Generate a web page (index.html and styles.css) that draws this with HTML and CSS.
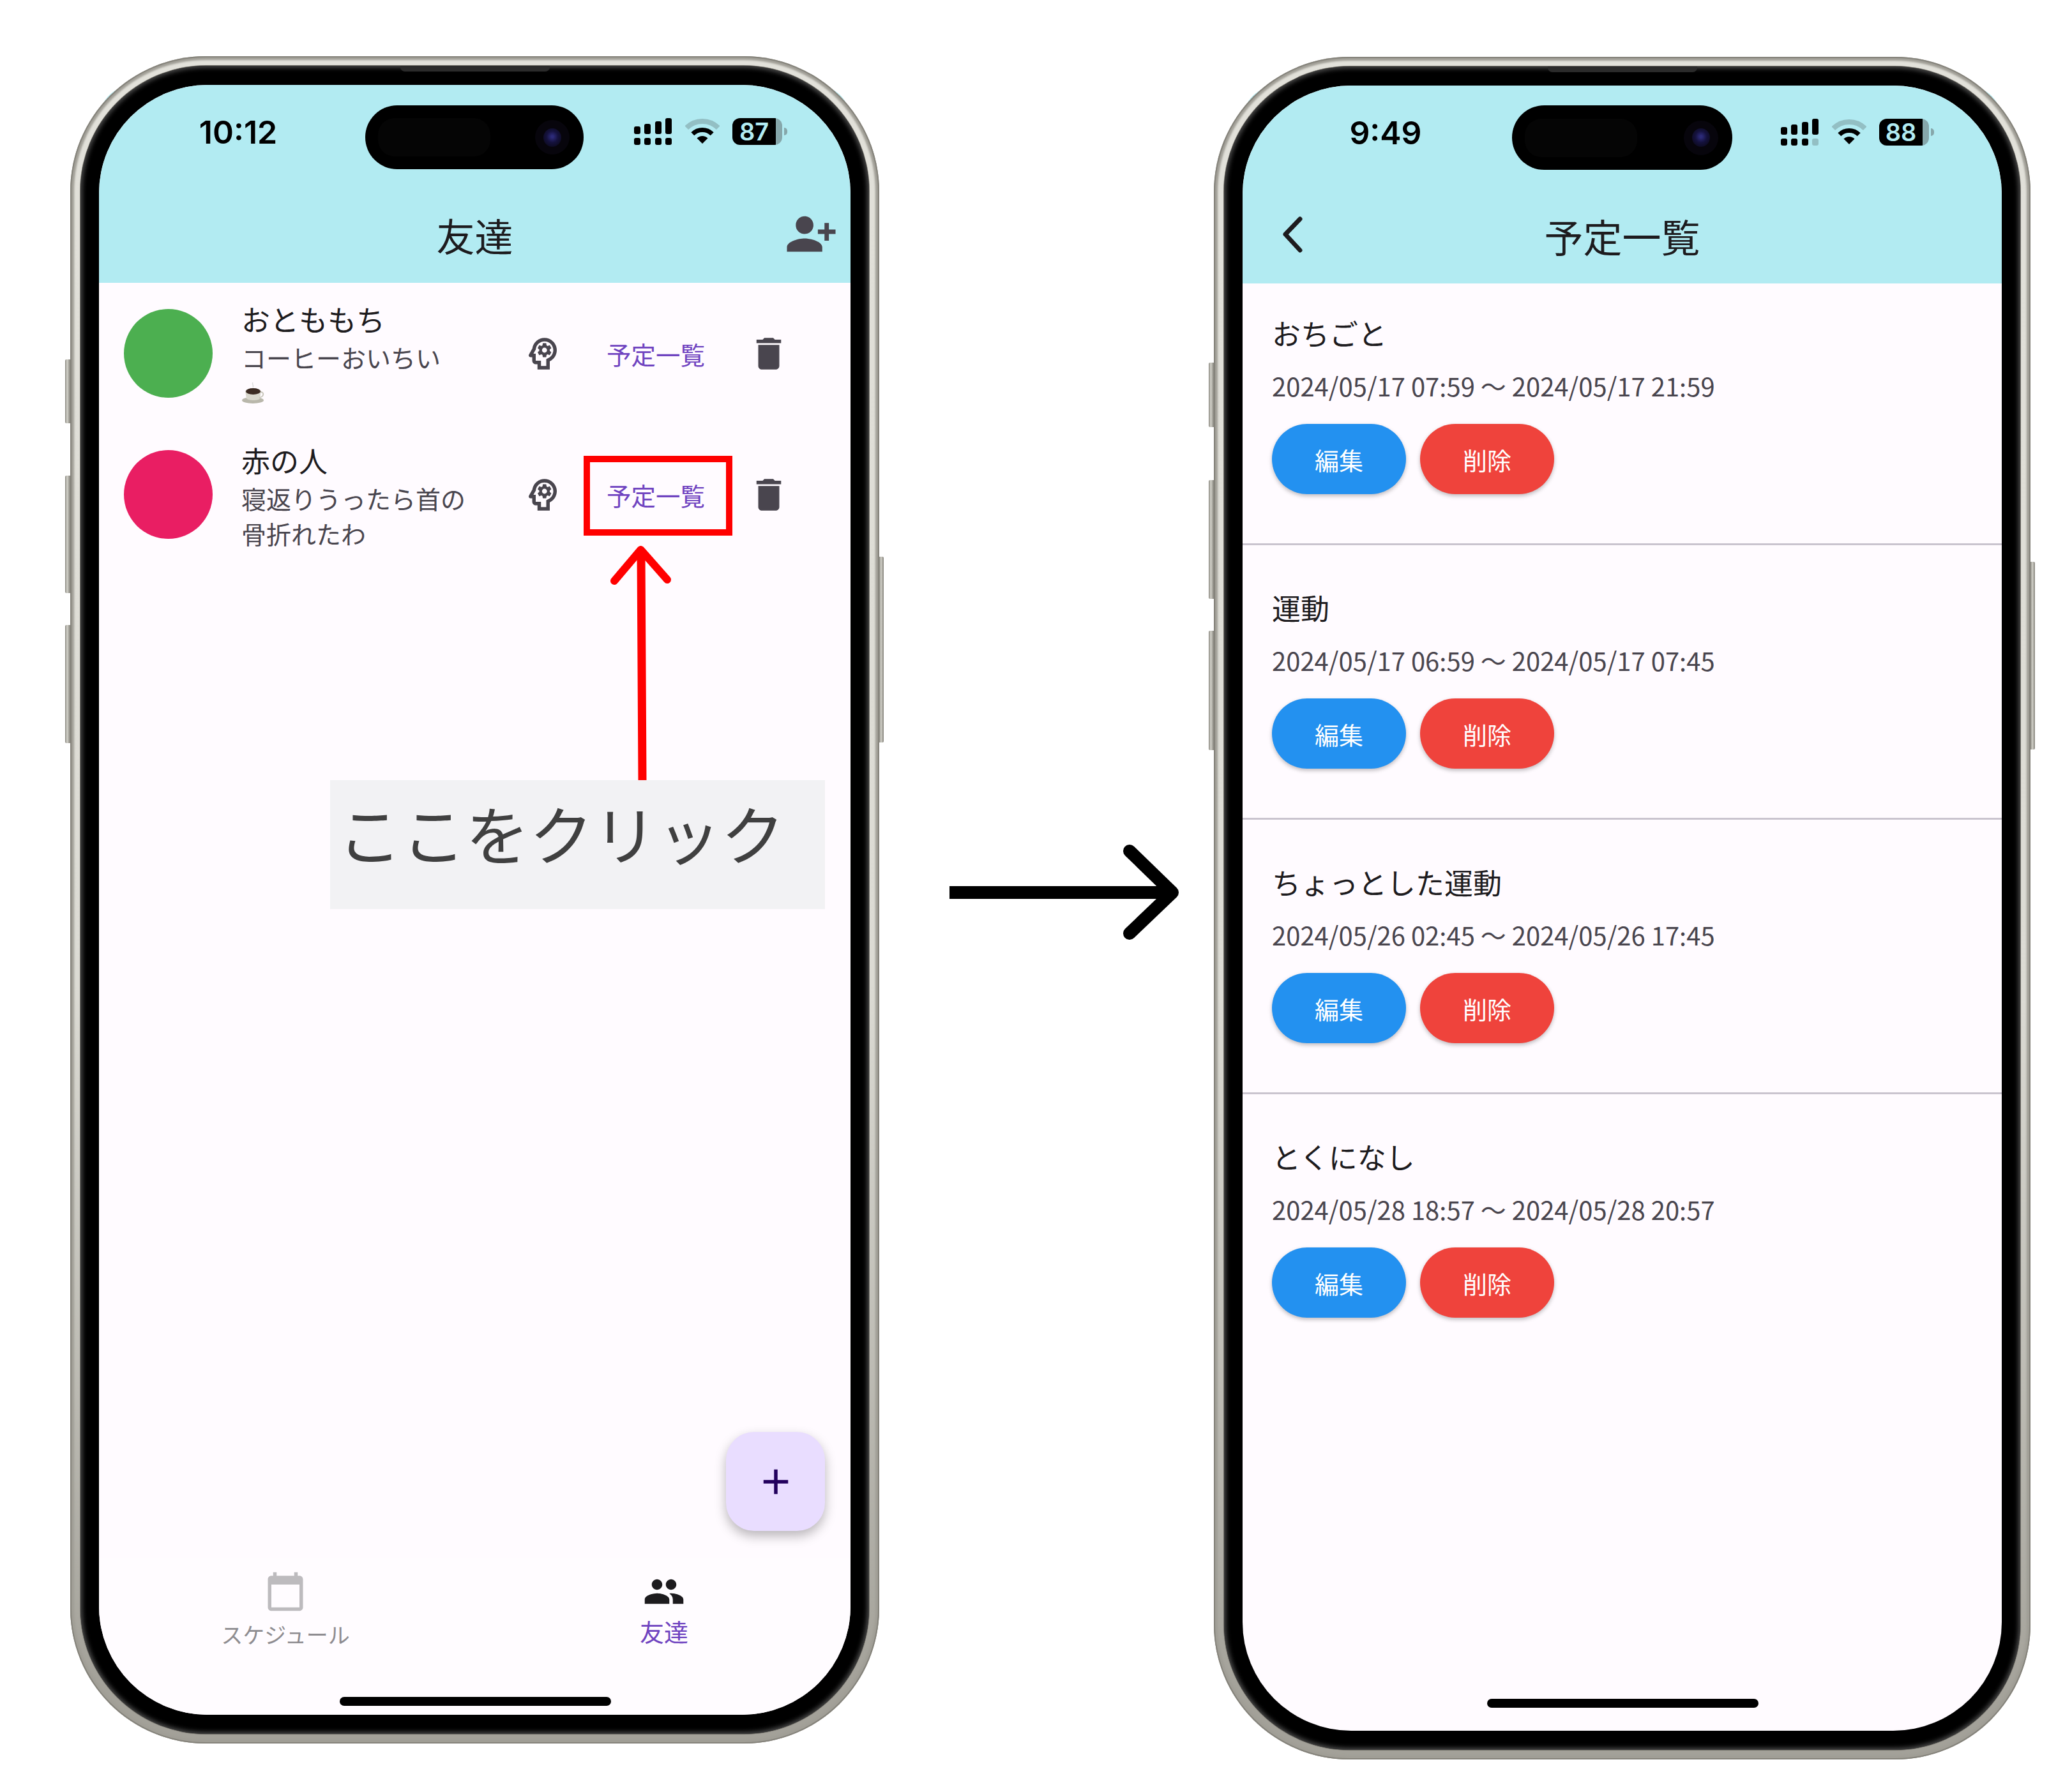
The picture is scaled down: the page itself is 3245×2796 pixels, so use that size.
FILE: index.html
```html
<!DOCTYPE html>
<html lang="ja">
<head>
  <meta charset="UTF-8">
  <meta name="viewport" content="width=device-width, initial-scale=1.0">
  <title>予定一覧</title>
  <link rel="stylesheet" href="styles.css">
</head>
<body>
  <div class="stage">

    <!-- left phone: friends -->
    <div class="phone phone-friends">
      <span class="side-btn side-1"></span>
      <span class="side-btn side-2"></span>
      <span class="side-btn side-3"></span>
      <span class="side-btn side-r"></span>
      <div class="bezel">
        <span class="speaker"></span>
        <div class="screen">
          <header class="app-head">
            <div class="status">
              <div class="clock">10:12</div>
              <div class="island"><span class="island-dark"></span><span class="camera"><span class="lens"></span></span></div>
              <div class="status-icons">
                <svg class="signal" viewBox="0 0 61 42">
                  <g fill="#000">
                    <rect x="1" y="13" width="10" height="12" rx="3"/>
                    <rect x="17" y="9" width="10" height="16" rx="3"/>
                    <rect x="34" y="5" width="10" height="20" rx="3"/>
                    <rect x="50" y="0" width="10" height="25" rx="3"/>
                    <rect x="1" y="31" width="10" height="11" rx="3"/>
                    <rect x="17" y="31" width="10" height="11" rx="3"/>
                    <rect x="34" y="31" width="10" height="11" rx="3"/>
                    <rect x="50" y="31" width="10" height="11" rx="3"/>
                  </g>
                </svg>
                <svg class="wifi" viewBox="0 0 54 40">
                  <path d="M2.25 14.25A35 35 0 0 1 51.75 14.25" fill="none" stroke="#93bfc4" stroke-width="8"/>
                  <path d="M11.8 23.8A21.5 21.5 0 0 1 42.2 23.8" fill="none" stroke="#000" stroke-width="7"/>
                  <path d="M27 39L18.5 30.5A12 12 0 0 1 35.5 30.5Z" fill="#000"/>
                </svg>
                <div class="battery"><div class="battery-body">87</div><span class="battery-nub"></span></div>
              </div>
            </div>
            <div class="title-row">
              <span></span>
              <h1 class="title">友達</h1>
              <svg class="add-friend" viewBox="0 0 24 24"><path d="M13 8c0-2.21-1.79-4-4-4S5 5.79 5 8s1.79 4 4 4 4-1.79 4-4zm2 2v2h3v3h2v-3h3v-2h-3V7h-2v3h-3zM1 18v2h16v-2c0-2.66-5.33-4-8-4s-8 1.34-8 4z"/></svg>
            </div>
          </header>

          <main class="friend-list">
            <div class="friend">
              <div class="avatar green"></div>
              <div class="friend-text">
                <div class="friend-name">おとももち</div>
                <div class="friend-sub">コーヒーおいちい<br>
                  <svg class="coffee" viewBox="0 0 38 33">
                    <path d="M18 0c-2 3 2 4 0 8" fill="none" stroke="#dcdcdc" stroke-width="1.5"/>
                    <ellipse cx="18" cy="28" rx="17" ry="5" fill="#b9b7ab"/>
                    <path d="M6 13h25l-2 12c-1 4-19 4-21 0z" fill="#d8d6cc"/>
                    <path d="M30 15c6 0 6 7-2 9" fill="none" stroke="#c8c6bb" stroke-width="2"/>
                    <ellipse cx="18.500" cy="14" rx="11.500" ry="5" fill="#3b2a22"/>
                  </svg>
                </div>
              </div>
              <svg class="icon" viewBox="0 0 24 24"><path d="M15.820 7.220l-1 .4c-.21-.16-.43-.29-.67-.39L14 6.170c-.02-.1-.1-.17-.2-.17h-1.600c-.1 0-.18.07-.19.17l-.15 1.060c-.24.1-.47.23-.67.39l-1-.4c-.09-.03-.2 0-.24.09l-.8 1.380c-.05.09-.03.2.05.26l.84.66c-.02.13-.04.26-.04.39 0 .13.01.26.03.39l-.84.66c-.07.06-.09.17-.05.25l.8 1.390c.05.09.15.12.25.09l.99-.4c.21.16.43.29.68.39l.14 1.060c.02.1.1.17.2.17h1.600c.1 0 .18-.07.2-.17l.15-1.060c.24-.1.47-.23.67-.39l.99.4c.09.04.2 0 .24-.09l.8-1.390c.05-.09.03-.19-.05-.25l-.83-.66c.02-.13.02-.26.02-.39 0-.13 0-.26-.02-.39l.83-.66c.07-.06.09-.17.05-.26l-.8-1.380c-.05-.09-.16-.12-.25-.09zM13 11.430c-.79 0-1.430-.64-1.430-1.430s.64-1.430 1.430-1.430 1.430.64 1.430 1.430-.64 1.430-1.430 1.430z"/><path fill-rule="evenodd" d="M19.940 9.060C19.500 5.730 16.570 3 13 3 9.470 3 6.570 5.610 6.080 9l-1.930 3.480c-.41.66.07 1.520.85 1.520h1v2c0 1.100.9 2 2 2h1v3h7v-4.680c2.620-1.250 4.350-4.080 3.940-7.260zM14.890 14.630l-.89.42V19h-3v-3H8v-4H6.700l1.330-2.330C8.210 7.060 10.350 5 13 5c2.760 0 5 2.240 5 5 0 2.090-1.260 3.880-3.110 4.630z"/></svg>
              <a class="text-btn">予定一覧</a>
              <svg class="icon" viewBox="0 0 24 24"><path d="M6 19c0 1.100.9 2 2 2h8c1.100 0 2-.9 2-2V7H6v12zM19 4h-3.500l-1-1h-5l-1 1H5v2h14V4z"/></svg>
            </div>
            <div class="friend">
              <div class="avatar pink"></div>
              <div class="friend-text">
                <div class="friend-name">赤の人</div>
                <div class="friend-sub">寝返りうったら首の<br>骨折れたわ</div>
              </div>
              <svg class="icon" viewBox="0 0 24 24"><path d="M15.820 7.220l-1 .4c-.21-.16-.43-.29-.67-.39L14 6.170c-.02-.1-.1-.17-.2-.17h-1.600c-.1 0-.18.07-.19.17l-.15 1.060c-.24.1-.47.23-.67.39l-1-.4c-.09-.03-.2 0-.24.09l-.8 1.380c-.05.09-.03.2.05.26l.84.66c-.02.13-.04.26-.04.39 0 .13.01.26.03.39l-.84.66c-.07.06-.09.17-.05.25l.8 1.390c.05.09.15.12.25.09l.99-.4c.21.16.43.29.68.39l.14 1.060c.02.1.1.17.2.17h1.600c.1 0 .18-.07.2-.17l.15-1.060c.24-.1.47-.23.67-.39l.99.4c.09.04.2 0 .24-.09l.8-1.390c.05-.09.03-.19-.05-.25l-.83-.66c.02-.13.02-.26.02-.39 0-.13 0-.26-.02-.39l.83-.66c.07-.06.09-.17.05-.26l-.8-1.380c-.05-.09-.16-.12-.25-.09zM13 11.430c-.79 0-1.430-.64-1.430-1.430s.64-1.430 1.430-1.430 1.430.64 1.430 1.430-.64 1.430-1.430 1.430z"/><path fill-rule="evenodd" d="M19.940 9.060C19.500 5.730 16.570 3 13 3 9.470 3 6.570 5.610 6.080 9l-1.930 3.480c-.41.66.07 1.520.85 1.520h1v2c0 1.100.9 2 2 2h1v3h7v-4.680c2.620-1.250 4.350-4.080 3.940-7.260zM14.890 14.630l-.89.42V19h-3v-3H8v-4H6.700l1.330-2.330C8.210 7.060 10.350 5 13 5c2.760 0 5 2.240 5 5 0 2.090-1.260 3.880-3.110 4.630z"/></svg>
              <a class="text-btn">予定一覧</a>
              <svg class="icon" viewBox="0 0 24 24"><path d="M6 19c0 1.100.9 2 2 2h8c1.100 0 2-.9 2-2V7H6v12zM19 4h-3.500l-1-1h-5l-1 1H5v2h14V4z"/></svg>
            </div>
          </main>

          <nav class="tabs">
            <div class="tab">
              <svg class="icon tab-off" viewBox="0 0 24 24"><path d="M20 3h-1V1h-2v2H7V1H5v2H4c-1.100 0-2 .9-2 2v16c0 1.100.9 2 2 2h16c1.100 0 2-.9 2-2V5c0-1.100-.9-2-2-2zm0 18H4V8h16v13z"/></svg>
              <span class="tab-label">スケジュール</span>
            </div>
            <div class="tab tab-on">
              <svg class="icon" viewBox="0 0 24 24"><path d="M16 11c1.660 0 2.990-1.340 2.990-3S17.660 5 16 5c-1.660 0-3 1.340-3 3s1.340 3 3 3zm-8 0c1.660 0 2.990-1.340 2.990-3S9.660 5 8 5C6.340 5 5 6.340 5 8s1.340 3 3 3zm0 2c-2.330 0-7 1.170-7 3.500V19h14v-2.500c0-2.330-4.670-3.500-7-3.500zm8 0c-.29 0-.62.02-.97.05 1.160.84 1.970 1.970 1.970 3.450V19h6v-2.500c0-2.330-4.670-3.500-7-3.500z"/></svg>
              <span class="tab-label">友達</span>
            </div>
          </nav>

          <button class="fab"><svg viewBox="0 0 24 24"><path d="M19 13h-6v6h-2v-6H5v-2h6V5h2v6h6v2z"/></svg></button>
          <span class="home-bar"></span>

          <!-- annotations drawn on top of the screenshot -->
          <div class="red-box"></div>
          <svg class="red-arrow" viewBox="0 0 110 367">
            <path d="M54 12L56 367" stroke-width="13"/>
            <path d="M12 55L53.500 6L95 53" stroke-width="12"/>
          </svg>
          <div class="click-label">ここをクリック</div>
        </div>
      </div>
    </div>

    <svg class="big-arrow" viewBox="0 0 370 150">
      <path d="M0 75H345" stroke-width="20"/>
      <path d="M282 10L349 75L282 139" stroke-width="20"/>
    </svg>

    <!-- right phone: schedule list -->
    <div class="phone phone-plans">
      <span class="side-btn side-1"></span>
      <span class="side-btn side-2"></span>
      <span class="side-btn side-3"></span>
      <span class="side-btn side-r"></span>
      <div class="bezel">
        <span class="speaker"></span>
        <div class="screen">
          <header class="app-head">
            <div class="status">
              <div class="clock">9:49</div>
              <div class="island"><span class="island-dark"></span><span class="camera"><span class="lens"></span></span></div>
              <div class="status-icons">
                <svg class="signal" viewBox="0 0 61 42">
                  <g fill="#000">
                    <rect x="1" y="13" width="10" height="12" rx="3"/>
                    <rect x="17" y="9" width="10" height="16" rx="3"/>
                    <rect x="34" y="5" width="10" height="20" rx="3"/>
                    <rect x="50" y="0" width="10" height="25" rx="3"/>
                    <rect x="1" y="31" width="10" height="11" rx="3"/>
                    <rect x="17" y="31" width="10" height="11" rx="3"/>
                    <rect x="34" y="31" width="10" height="11" rx="3"/>
                    <rect x="50" y="31" width="10" height="11" rx="3" fill="#93bfc4"/>
                  </g>
                </svg>
                <svg class="wifi" viewBox="0 0 54 40">
                  <path d="M2.25 14.25A35 35 0 0 1 51.75 14.25" fill="none" stroke="#93bfc4" stroke-width="8"/>
                  <path d="M11.8 23.8A21.5 21.5 0 0 1 42.2 23.8" fill="none" stroke="#000" stroke-width="7"/>
                  <path d="M27 39L18.5 30.5A12 12 0 0 1 35.5 30.5Z" fill="#000"/>
                </svg>
                <div class="battery"><div class="battery-body">88</div><span class="battery-nub"></span></div>
              </div>
            </div>
            <div class="title-row">
              <svg class="back" viewBox="0 0 36 60"><path d="M30 6L7 30L30 55"/></svg>
              <h1 class="title">予定一覧</h1>
              <span></span>
            </div>
          </header>

          <main class="plan-list">
            <section class="plan">
              <div class="plan-name">おちごと</div>
              <div class="plan-date">2024/05/17 07:59 〜 2024/05/17 21:59</div>
              <div class="plan-actions"><button class="pill pill-blue">編集</button><button class="pill pill-red">削除</button></div>
            </section>
            <section class="plan">
              <div class="plan-name">運動</div>
              <div class="plan-date">2024/05/17 06:59 〜 2024/05/17 07:45</div>
              <div class="plan-actions"><button class="pill pill-blue">編集</button><button class="pill pill-red">削除</button></div>
            </section>
            <section class="plan">
              <div class="plan-name">ちょっとした運動</div>
              <div class="plan-date">2024/05/26 02:45 〜 2024/05/26 17:45</div>
              <div class="plan-actions"><button class="pill pill-blue">編集</button><button class="pill pill-red">削除</button></div>
            </section>
            <section class="plan">
              <div class="plan-name">とくになし</div>
              <div class="plan-date">2024/05/28 18:57 〜 2024/05/28 20:57</div>
              <div class="plan-actions"><button class="pill pill-blue">編集</button><button class="pill pill-red">削除</button></div>
            </section>
          </main>
          <span class="home-bar"></span>
        </div>
      </div>
    </div>

  </div>
</body>
</html>
```

FILE: styles.css
```css
*{
  box-sizing: border-box;
}
body{
  margin: 0;
  background-color: #fff;
  font-family: "Noto Sans CJK JP", "Noto Sans", sans-serif;
  color: #1d1b1e;
}
.stage{
  display: flex;
  align-items: flex-start;
  padding: 88px 0 0 110px;
}

/* phone frame */
.phone{
  position: relative;
  flex: none;
  padding: 15px 16px;
  border-radius: 212px;
  background: linear-gradient(#e2e1da, #dcdbd4 55%, #a3a199 97%);
  box-shadow: inset 0 0 0 2px #85837b, inset 0 0 3px 6px #a09e96;
}
.phone::before{
  content: "";
  position: absolute;
  top: 45px;
  left: 45px;
  right: 45px;
  height: 200px;
  border-radius: 55px 55px 0 0;
  background-color: #b2ebf2;
  z-index: -1;
}
.phone-friends{
  width: 1267px;
  height: 2643px;
}
.phone-plans{
  width: 1279px;
  height: 2667px;
  margin: 1px 0 0 44px;
}
.side-btn{
  position: absolute;
  width: 8px;
  background: linear-gradient(90deg, #85837b, #d4d3cb 40%, #85837b);
}
.side-1{ left: -8px; top: 17.97%; height: 3.78%; border-radius: 2px 0 0 2px; }
.side-2{ left: -8px; top: 24.86%; height: 6.96%; border-radius: 2px 0 0 2px; }
.side-3{ left: -8px; top: 33.71%; height: 7%; border-radius: 2px 0 0 2px; }
.side-r{ right: -7px; width: 7px; top: 29.66%; height: 11.01%; border-radius: 0 2px 2px 0; }

.bezel{
  position: relative;
  height: 100%;
  padding: 30px 29px;
  border-radius: 197px;
  background-color: #000;
  box-shadow: 0 0 0 1px #77756e, inset 0 0 7px 3px #4a4a4a;
}
.speaker{
  position: absolute;
  top: 0;
  left: 50%;
  width: 234px;
  height: 9px;
  margin-left: -117px;
  border-radius: 0 0 7px 7px;
  background-color: #2b2b2b;
}
.screen{
  position: relative;
  display: flex;
  flex-direction: column;
  height: 100%;
  overflow: hidden;
  border-radius: 170px;
  background-color: #fffbff;
}

/* header + status bar */
.app-head{
  flex: none;
  height: 310px;
  background-color: #b2ebf2;
}
.status{
  display: flex;
  align-items: center;
  padding-top: 32px;
}
.clock{
  width: 417px;
  padding-left: 19px;
  margin-bottom: 16px;
  text-align: center;
  font-family: Inter, sans-serif;
  font-weight: 600;
  font-size: 50px;
  line-height: 84px;
  color: #000;
}
.island{
  display: flex;
  align-items: center;
  justify-content: space-between;
  width: 342px;
  height: 100px;
  padding: 0 22px 0 20px;
  border-radius: 50px;
  background-color: #000;
}
.island-dark{
  width: 176px;
  height: 60px;
  border-radius: 26px;
  background-color: #050505;
}
.camera{
  display: flex;
  align-items: center;
  justify-content: center;
  width: 54px;
  height: 54px;
  border-radius: 50%;
  background-color: #07050c;
}
.lens{
  width: 28px;
  height: 29px;
  border-radius: 50%;
  background: radial-gradient(circle at 50% 45%, #2c2a78 8%, #15123e 42%, #0c0a1e 80%);
}
.status-icons{
  display: flex;
  align-items: center;
  gap: 20px;
  margin: 0 0 18px 78px;
}
.signal{
  width: 61px;
  height: 42px;
}
.wifi{
  width: 54px;
  height: 40px;
}
.battery{
  display: flex;
  align-items: center;
  gap: 3px;
}
.battery-body{
  width: 78px;
  height: 42px;
  padding-right: 10px;
  border-radius: 12px;
  background: linear-gradient(90deg, #000 87%, #86a7ab 87%);
  text-align: center;
  font-family: Inter, sans-serif;
  font-weight: 600;
  font-size: 38px;
  line-height: 42px;
  color: #b2ebf2;
}
.battery-nub{
  width: 5px;
  height: 12px;
  border-radius: 0 5px 5px 0;
  background-color: #86a7ab;
}
.title-row{
  display: grid;
  grid-template-columns: 1fr auto 1fr;
  align-items: center;
  height: 146px;
  margin-top: 32px;
}
.title{
  margin: 0 0 4px;
  font-weight: 400;
  font-size: 60px;
  line-height: 80px;
}
.add-friend{
  justify-self: end;
  width: 83px;
  height: 83px;
  margin: 0 20px 7px 0;
  fill: #49454e;
}
.back{
  width: 36px;
  height: 60px;
  margin: 0 0 10px 60px;
  fill: none;
  stroke: #1d1b1e;
  stroke-width: 7;
  stroke-linecap: round;
  stroke-linejoin: round;
}

/* friends */
.friend-list{
  flex: 1;
}
.friend{
  display: flex;
  align-items: center;
  height: 221px;
  padding-left: 39px;
}
.avatar{
  flex: none;
  width: 139px;
  height: 139px;
  margin-right: 45px;
  border-radius: 50%;
}
.green{ background-color: #4caf50; }
.pink{ background-color: #e91e63; }
.friend-text{
  width: 439px;
  padding-top: 3px;
}
.friend-name{
  font-size: 45px;
  line-height: 64px;
}
.friend-sub{
  font-size: 39px;
  line-height: 55px;
  color: #49454e;
}
.coffee{
  display: inline-block;
  width: 38px;
  height: 33px;
  vertical-align: -1px;
}
.icon{
  flex: none;
  width: 66px;
  height: 66px;
  fill: #49454e;
}
.text-btn{
  padding: 0 67px;
  font-size: 38.5px;
  line-height: 50px;
  color: #6f43c0;
  white-space: nowrap;
}

/* bottom tabs */
.tabs{
  display: grid;
  grid-template-columns: 584px 1fr;
  flex: none;
  height: 245px;
  padding-top: 19px;
  background-color: #fffcff;
}
.tab{
  display: flex;
  flex-direction: column;
  align-items: center;
}
.tab-off{
  fill: #bdbbbe;
}
.tab-label{
  margin-top: 14px;
  font-size: 34px;
  line-height: 40px;
  color: #8e8c90;
}
.tab-on{
  padding-left: 9px;
}
.tab-on .icon{
  fill: #1d1b1e;
}
.tab-on .tab-label{
  margin-top: 9px;
  font-size: 38px;
  color: #6f43c0;
}

.fab{
  position: absolute;
  left: 982px;
  top: 2110px;
  width: 155px;
  height: 155px;
  padding: 0;
  display: flex;
  align-items: center;
  justify-content: center;
  border: none;
  border-radius: 44px;
  background-color: #e9ddff;
  box-shadow: 0 8px 18px rgba(0, 0, 0, 0.28);
}
.fab svg{
  width: 66px;
  height: 66px;
  fill: #22005d;
}
.home-bar{
  position: absolute;
  left: 50%;
  bottom: 14px;
  width: 425px;
  height: 14px;
  margin-left: -212px;
  border-radius: 7px;
  background-color: #000;
}

/* annotations */
.red-box{
  position: absolute;
  left: 759px;
  top: 581px;
  width: 233px;
  height: 125px;
  border: 10px solid #f00;
}
.red-arrow{
  position: absolute;
  left: 795px;
  top: 722px;
  width: 110px;
  height: 367px;
  fill: none;
  stroke: #f00;
  stroke-linecap: round;
  stroke-linejoin: round;
}
.click-label{
  position: absolute;
  left: 362px;
  top: 1089px;
  width: 775px;
  height: 202px;
  padding-left: 12px;
  background-color: #f2f2f4;
  font-size: 100px;
  line-height: 164px;
  color: #404040;
}

.big-arrow{
  flex: none;
  width: 370px;
  height: 150px;
  margin: 1235px 0 0 110px;
  fill: none;
  stroke: #000;
  stroke-linejoin: round;
  stroke-linecap: round;
}

/* schedule list */
.phone-plans .status{
  padding-top: 31px;
}
.phone-plans .clock{
  width: 422px;
  padding-left: 26px;
}
.phone-plans .island{
  width: 345px;
  height: 101px;
  border-radius: 51px;
}
.phone-plans .status-icons{
  margin-left: 75px;
}
.phone-plans .title-row{
  height: 144px;
  margin-top: 34px;
}
.phone-plans .title{
  font-size: 61px;
}
.phone-plans .home-bar{
  bottom: 36px;
}
.plan{
  padding: 46px 0 77px 46px;
  border-bottom: 3px solid #cac4cf;
  margin-bottom: 20px;
}
.plan:last-child{
  border-bottom: none;
}
.plan-name{
  font-size: 45px;
  line-height: 64px;
}
.plan-date{
  margin-top: 23px;
  font-size: 40px;
  line-height: 55px;
  color: #49454e;
}
.plan-actions{
  display: flex;
  gap: 22px;
  margin-top: 32px;
}
.pill{
  width: 210px;
  height: 110px;
  padding: 0;
  border: none;
  border-radius: 55px;
  font-family: inherit;
  font-size: 38px;
  color: #fff;
  box-shadow: 0 3px 6px rgba(0, 0, 0, 0.25);
}
.pill-blue{ background-color: #2391f0; }
.pill-red{ background-color: #ef433c; }
```
